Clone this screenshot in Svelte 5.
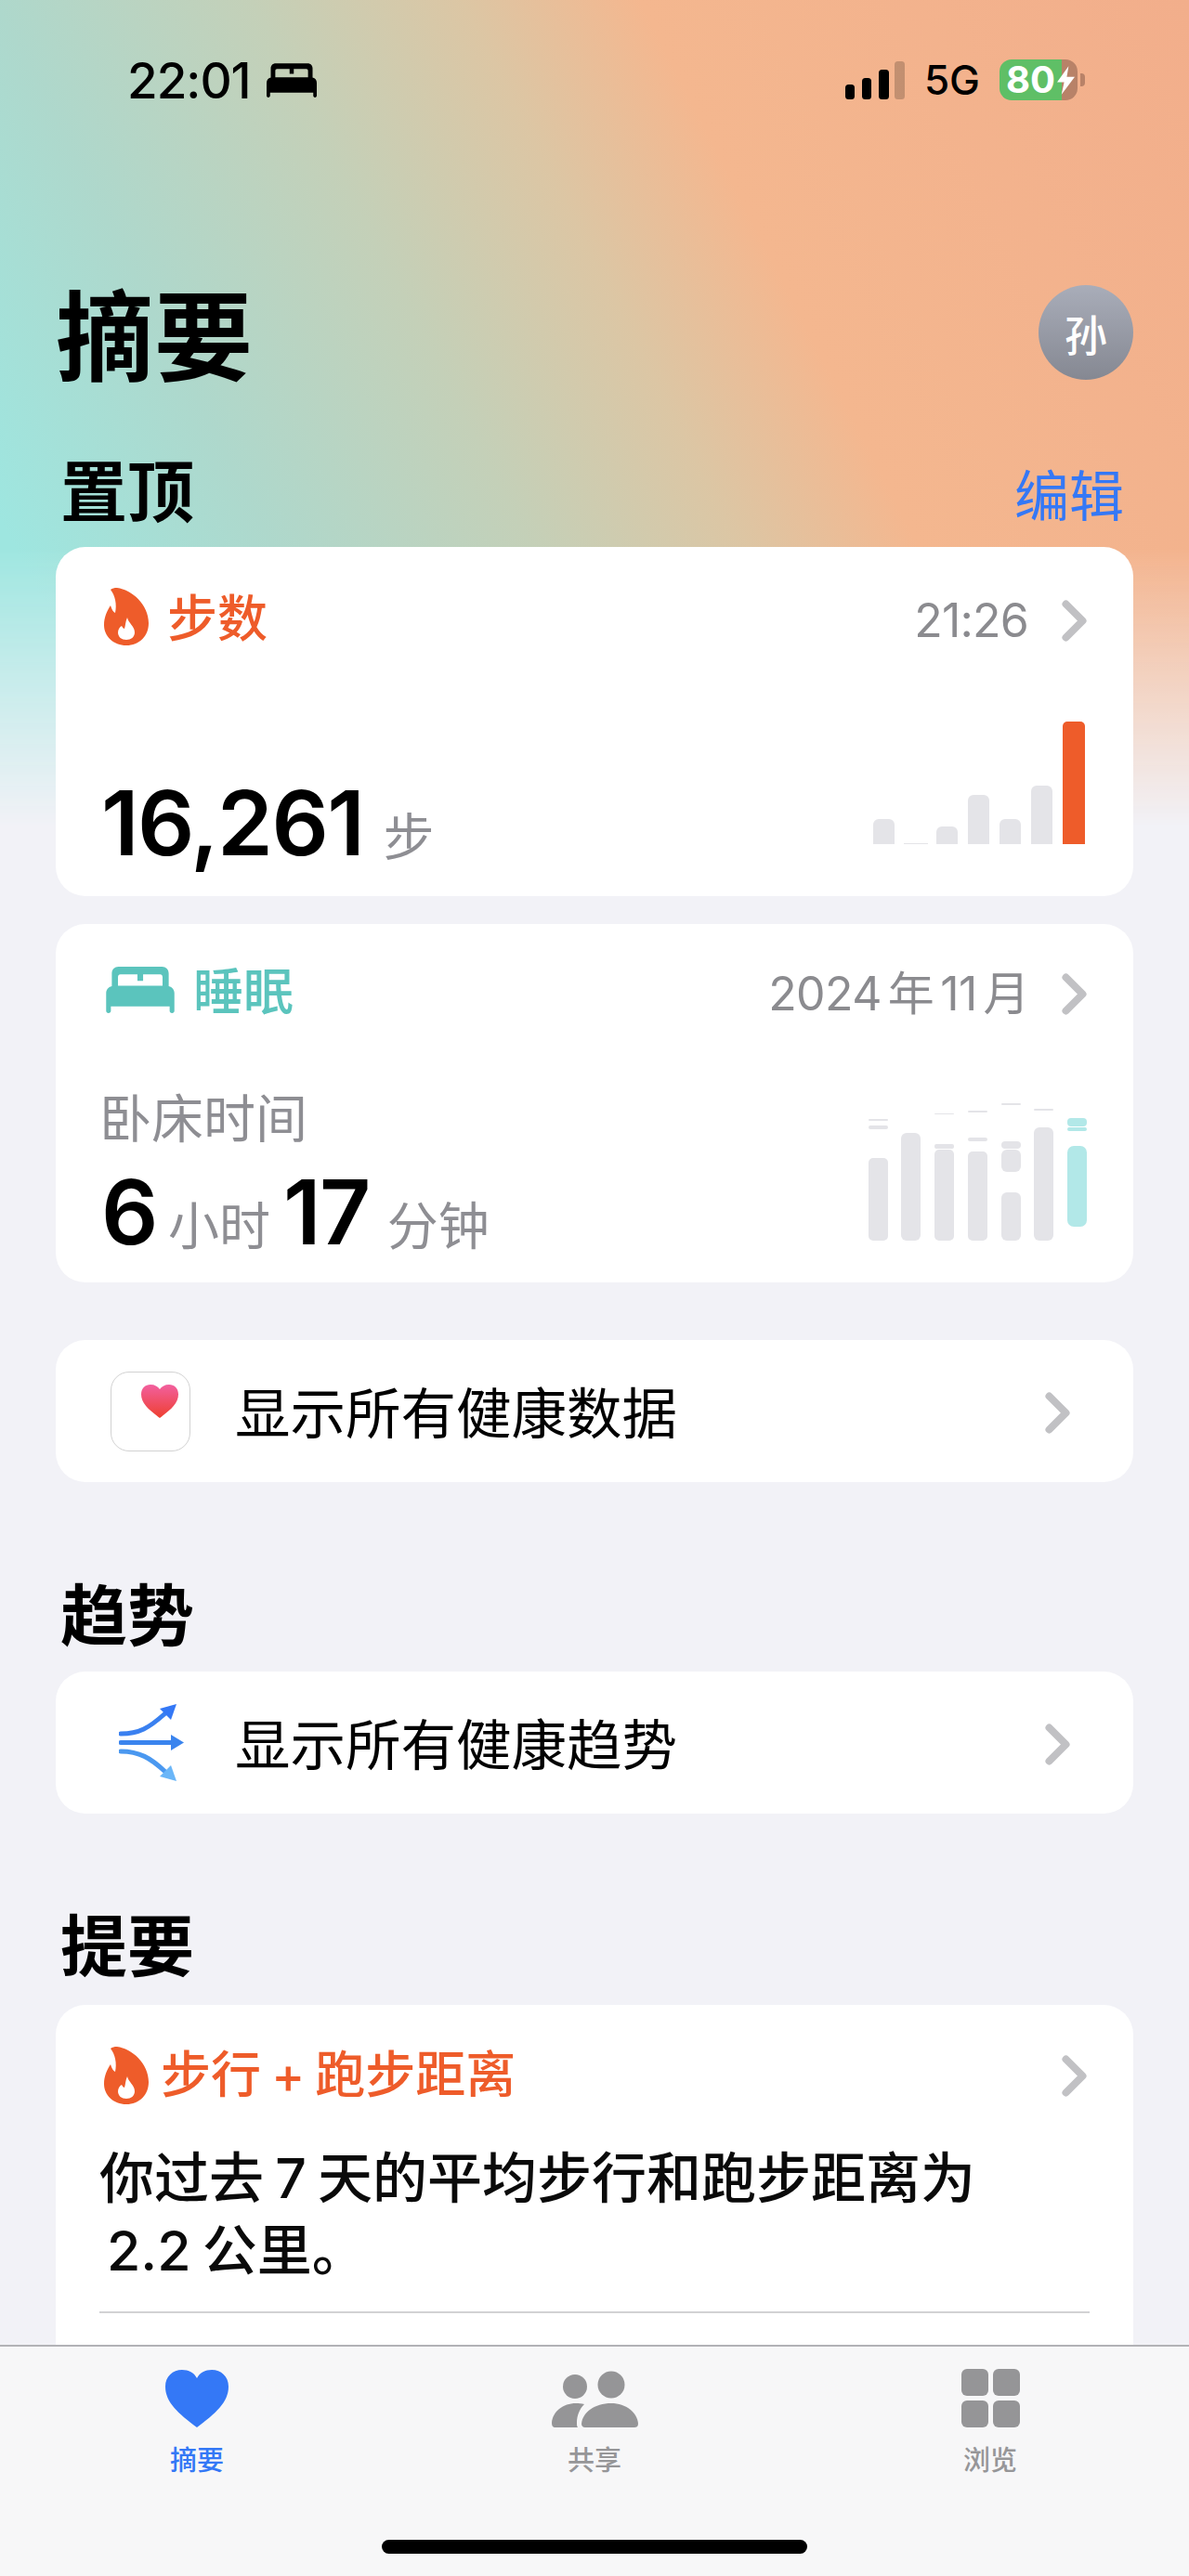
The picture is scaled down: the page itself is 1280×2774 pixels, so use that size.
<script>
  const steps = [
    { x: 0, top: 105 },
    { x: 34, top: 130, thin: true },
    { x: 68, top: 113 },
    { x: 102, top: 79 },
    { x: 136, top: 105 },
    { x: 170, top: 69 }
  ];
  // [x, y, height, radius], relative to the chart origin (935, 1186)
  const sleepGray = [
    [0, 59, 89, 5], [0, 24, 4, 2], [0, 17, 2, 1],
    [35, 32, 116, 6],
    [71, 50, 98, 5], [71, 44, 5, 2], [71, 11, 1, 1],
    [107, 52, 96, 5], [107, 37, 4, 2], [107, 8, 2, 1],
    [143, 96, 52, 6], [143, 50, 24, 6], [143, 41, 8, 4], [143, 0, 2, 1],
    [178, 26, 122, 6], [178, 6, 2, 1]
  ];
  const sleepTeal = [
    [214, 46, 87, 7], [214, 16, 9, 4], [214, 26, 4, 2]
  ];
</script>

{#snippet flame(cls)}
  <svg class={cls} viewBox="0 0 48 62" aria-hidden="true">
    <path fill="#ee5c2a" d="M14 0C30 2 48 18 48 38C48 52 38 62 24 62C10 62 0 52 0 40C0 32 3 25 7 19C8 23 10 26 12 27C14 18 12 8 7 2C9 .5 11 0 14 0Z"/>
    <path fill="#fff" d="M25 32C26 38 33 41 33 48C33 53 29 56 24 56C19 56 15 53 15 48C15 45 17 42 19 41C20 43 21 44 22 44C23 41 23 36 25 32Z"/>
  </svg>
{/snippet}

{#snippet bed(cls, color)}
  <svg class={cls} viewBox="0 0 72 49" aria-hidden="true">
    <path fill={color} fill-rule="evenodd" d="M13 0H59C63 0 66 3 66 7V20.500C70 21.500 72 24.500 72 28V46.500C72 48 71 49 69.500 49C68 49 67 48 67 46.500V42H5V46.500C5 48 4 49 2.500 49C1 49 0 48 0 46.500V28C0 24.500 2 21.500 6 20.500V7C6 3 9 0 13 0ZM15 8C13.500 8 12.500 9 12.500 11V20H59.500V11C59.500 9 58.500 8 57 8H39V15H33V8Z"/>
  </svg>
{/snippet}

{#snippet chevron()}
  <svg class="chevron" viewBox="0 0 27 45" aria-hidden="true">
    <path d="M4.500 4.500L22.500 22.500L4.500 40.500" fill="none" stroke="#c1c1c4" stroke-width="8" stroke-linecap="round" stroke-linejoin="round"/>
  </svg>
{/snippet}

<div class="page">
  <div class="wash"></div>
  <div class="content">
    <header class="status">
      <div class="status-left">
        <span class="clock">22:01</span>
        {@render bed("status-bed", "#000")}
      </div>
      <div class="status-right">
        <svg class="signal" viewBox="0 0 64 41" aria-hidden="true">
          <rect x="0" y="25" width="10" height="16" rx="3.500"/>
          <rect x="18" y="18" width="10" height="23" rx="3.500"/>
          <rect x="36" y="9" width="11" height="32" rx="3.500"/>
          <rect x="53" y="0" width="11" height="41" rx="3.500" opacity="0.2"/>
        </svg>
        <span class="net">5G</span>
        <div class="battery-wrap">
          <div class="battery">
            <span class="battery-num">80</span>
            <svg class="bolt" viewBox="0 0 20 32" aria-hidden="true"><path fill="#fff" d="M13 0L0 18H8L5 32L20 12H11Z"/></svg>
          </div>
          <div class="nub"></div>
        </div>
      </div>
    </header>

    <div class="title-row">
      <h1>摘要</h1>
      <div class="avatar">孙</div>
    </div>

    <div class="section-head pinned">
      <h2>置顶</h2>
      <span class="edit">编辑</span>
    </div>

    <section class="card metric steps">
      <div class="metric-head">
        <div class="metric-name orange">
          {@render flame("flame")}
          <span>步数</span>
        </div>
        <div class="metric-meta"><span class="time">21:26</span>{@render chevron()}</div>
      </div>
      <div class="metric-body">
        <div class="value"><b>16,261</b><small class="step-unit">步</small></div>
        <svg class="step-chart" viewBox="0 0 228 132" aria-hidden="true">
          {#each steps as s}
            {#if s.thin}
              <rect x={s.x - 1} y="131" width="26" height="1" fill="#e4e4e8"/>
            {:else}
              <rect x={s.x} y={s.top} width="23" height={132 - s.top + 8} rx="6" fill="#e4e4e8"/>
            {/if}
          {/each}
          <rect x="204" y="0" width="24" height="142" rx="5" fill="#ee5c2a"/>
        </svg>
      </div>
    </section>

    <section class="card metric sleep">
      <div class="metric-head">
        <div class="metric-name teal">
          {@render bed("sleep-bed", "#5bc4bd")}
          <span>睡眠</span>
        </div>
        <div class="metric-meta"><span class="month">2024 年 11 月</span>{@render chevron()}</div>
      </div>
      <div class="metric-body sleep-body">
        <div>
          <div class="sleep-label">卧床时间</div>
          <div class="value sleep-value"><b>6</b><small>小时</small><b>17</b><small>分钟</small></div>
        </div>
        <svg class="sleep-chart" viewBox="0 0 235 148" aria-hidden="true">
          {#each sleepGray as b}
            <rect x={b[0]} y={b[1]} width="21" height={b[2]} rx={b[3]} fill="#e4e4e8"/>
          {/each}
          {#each sleepTeal as b}
            <rect x={b[0]} y={b[1]} width="21" height={b[2]} rx={b[3]} fill="#b2e8e8"/>
          {/each}
        </svg>
      </div>
    </section>

    <section class="card row first-row">
      <div class="app-icon">
        <svg class="app-heart" viewBox="0 0 40 36" aria-hidden="true">
          <defs>
            <linearGradient id="hg" x1="0" y1="0" x2="0" y2="1">
              <stop offset="0" stop-color="#f2609f"/>
              <stop offset="1" stop-color="#ee3f30"/>
            </linearGradient>
          </defs>
          <path fill="url(#hg)" d="M20 36C8 27 0 20 0 10.500C0 4 4.500 0 10 0C14.500 0 18 2 20 5C22 2 25.500 0 30 0C35.500 0 40 4 40 10.500C40 20 32 27 20 36Z"/>
        </svg>
      </div>
      <span class="row-text">显示所有健康数据</span>
      {@render chevron()}
    </section>

    <div class="section-head trends"><h2>趋势</h2></div>
    <section class="card row">
      <svg class="arrows" viewBox="0 0 70 83" aria-hidden="true">
        <g fill="none" stroke-width="5" stroke-linecap="round">
          <path d="M2 32C22 32 32 26 50 10" stroke="#3a80f0"/>
          <path d="M2 41.500H58" stroke="#3a84ee"/>
          <path d="M2 51C22 51 34 58 50 73" stroke="#4a98f0"/>
        </g>
        <path fill="#3478f6" d="M62 0L56 17L44 5Z"/>
        <path fill="#3a84ee" d="M70 41.500L56 33V50Z"/>
        <path fill="#6ab6f8" d="M62 83L44 78L56 66Z"/>
      </svg>
      <span class="row-text">显示所有健康趋势</span>
      {@render chevron()}
    </section>

    <div class="section-head highlights"><h2>提要</h2></div>
    <section class="card highlight">
      <div class="metric-head">
        <div class="metric-name orange tight">
          {@render flame("flame")}
          <span>步行 + 跑步距离</span>
        </div>
        <div class="metric-meta">{@render chevron()}</div>
      </div>
      <p class="summary">你过去 7 天的平均步行和跑步距离为<br /><span class="indent">2.2 公里。</span></p>
      <div class="divider"></div>
    </section>
  </div>

  <nav class="tabbar">
    <div class="tab active">
      <svg class="tab-heart" viewBox="0 0 68 62" aria-hidden="true">
        <path fill="#3478f6" d="M34 62C14 47 0 35 0 18C0 7 8 0 18 0C25 0 31 3 34 9C37 3 43 0 50 0C60 0 68 7 68 18C68 35 54 47 34 62Z"/>
      </svg>
      <span>摘要</span>
    </div>
    <div class="tab">
      <svg class="tab-share" viewBox="0 0 93 61" aria-hidden="true">
        <g fill="#959597">
          <circle cx="64" cy="15" r="14.500"/>
          <path d="M36 61C33 61 32 59 32 57C33 45 46 35 64 35C80 35 92 45 93 57C93 60 91 61 89 61Z"/>
          <circle cx="25" cy="17" r="13"/>
          <path d="M4 61C1 61 0 59 0 56C1 44 12 35 26 35C29 35 32 35 35 36C30 41 27 48 27 56C27 58 27 60 28 61Z"/>
        </g>
      </svg>
      <span>共享</span>
    </div>
    <div class="tab">
      <div class="tab-grid"><i></i><i></i><i></i><i></i></div>
      <span>浏览</span>
    </div>
    <div class="home"></div>
  </nav>
</div>

<style>
  :global(body) {
    margin: 0;
    background: #f2f2f7;
  }
  .page {
    position: relative;
    width: 1280px;
    height: 2774px;
    overflow: hidden;
    background: #f2f2f7;
    font-family: Inter, "Noto Sans CJK SC", sans-serif;
    color: #000;
  }
  .wash {
    position: absolute;
    inset: 0 0 auto 0;
    height: 900px;
    background: linear-gradient(63deg, #9ee6e0 0%, #9ee6e0 10%, #aed8cc 26%, #c4d0b8 42%, #dcc6a4 55%, #f4b78f 66%, #f2ae8b 100%);
    -webkit-mask-image: linear-gradient(to bottom, #000 0, #000 590px, rgba(0, 0, 0, 0.55) 720px, transparent 890px);
    mask-image: linear-gradient(to bottom, #000 0, #000 590px, rgba(0, 0, 0, 0.55) 720px, transparent 890px);
  }
  .content {
    position: relative;
    padding: 0 60px;
  }
  .status {
    display: flex;
    justify-content: space-between;
    align-items: center;
    height: 172px;
    box-sizing: border-box;
    padding: 0 52px 0 77px;
  }
  .status-left {
    display: flex;
    align-items: center;
    gap: 17px;
  }
  .clock {
    font-size: 53px;
    font-weight: 500;
    line-height: 1;
    letter-spacing: -1px;
    margin-top: 2px;
  }
  .status-bed {
    width: 54px;
    height: 37px;
  }
  .status-right {
    display: flex;
    align-items: center;
  }
  .signal {
    width: 64px;
    height: 41px;
    margin-right: 21px;
  }
  .net {
    font-size: 44px;
    font-weight: 500;
    line-height: 1;
    margin-right: 21px;
  }
  .battery-wrap {
    display: flex;
    align-items: center;
    gap: 3px;
  }
  .battery {
    width: 84px;
    height: 44px;
    border-radius: 13px;
    background: linear-gradient(to right, #5fbf66 67px, #b88268 67px);
    display: flex;
    align-items: center;
    padding-left: 7px;
    box-sizing: border-box;
  }
  .battery-num {
    color: #fff;
    font-size: 40px;
    font-weight: 700;
    line-height: 1;
  }
  .bolt {
    width: 19px;
    height: 31px;
    margin-left: 2px;
    flex: none;
  }
  .nub {
    width: 5px;
    height: 14px;
    border-radius: 0 4px 4px 0;
    background: #b88268;
  }
  .title-row {
    display: flex;
    justify-content: space-between;
    align-items: center;
    height: 102px;
    margin-top: 135px;
  }
  h1 {
    margin: 0;
    padding-top: 12px;
    font-size: 106px;
    font-weight: 700;
    line-height: 102px;
  }
  .avatar {
    width: 102px;
    height: 102px;
    border-radius: 50%;
    background: linear-gradient(#a9adb9, #858892);
    color: #fff;
    font-size: 46px;
    font-weight: 500;
    display: flex;
    align-items: center;
    justify-content: center;
  }
  .section-head {
    display: flex;
    justify-content: space-between;
    align-items: center;
    height: 76px;
    padding: 0 10px 0 5px;
  }
  h2 {
    margin: 0;
    font-size: 72px;
    font-weight: 700;
    line-height: 76px;
  }
  .pinned {
    margin-top: 83px;
    margin-bottom: 21px;
  }
  .edit {
    color: #3478f6;
    font-size: 59px;
    line-height: 76px;
    margin-top: 10px;
  }
  .card {
    background: #fff;
    border-radius: 32px;
    box-sizing: border-box;
  }
  .metric {
    padding: 44px 50px 0 52px;
  }
  .steps {
    height: 376px;
  }
  .sleep {
    height: 386px;
    margin-top: 30px;
    padding-top: 40px;
  }
  .metric-head {
    display: flex;
    justify-content: space-between;
    align-items: center;
    height: 62px;
  }
  .metric-name {
    display: flex;
    align-items: center;
    gap: 20px;
    font-size: 54px;
    font-weight: 500;
    line-height: 62px;
  }
  .metric-name span {
    margin-top: 5px;
  }
  .metric-name.tight {
    gap: 13px;
    word-spacing: -0.06em;
  }
  .metric-name.tight span {
    margin-top: 0;
  }
  .orange {
    color: #ee5c2a;
  }
  .teal {
    color: #5bc4bd;
  }
  .flame {
    width: 48px;
    height: 62px;
    flex: none;
  }
  .sleep-bed {
    width: 74px;
    height: 50px;
    margin-left: 2px;
  }
  .metric-meta {
    display: flex;
    align-items: center;
    gap: 36px;
    color: #8b8b8f;
    font-size: 50px;
    line-height: 62px;
    padding-top: 8px;
  }
  .highlight .metric-meta {
    padding-top: 0;
  }
  .time {
    letter-spacing: -0.8px;
  }
  .month {
    word-spacing: -0.13em;
    letter-spacing: -0.6px;
    margin-right: -1px;
  }
  .chevron {
    width: 27px;
    height: 45px;
    flex: none;
  }
  .metric-body {
    display: flex;
    justify-content: space-between;
    align-items: flex-end;
    margin-top: 82px;
  }
  .value {
    display: flex;
    align-items: baseline;
    margin-left: -3px;
    line-height: 100px;
  }
  .value b {
    font-size: 96px;
    font-weight: 600;
    letter-spacing: -1.5px;
  }
  .value small {
    color: #8e8e93;
    font-size: 55px;
    margin-left: 12px;
  }
  .value .step-unit {
    margin-left: 21px;
  }
  .step-chart {
    width: 228px;
    height: 132px;
    margin-right: 2px;
    margin-bottom: 42px;
    overflow: hidden;
  }
  .sleep-body {
    margin-top: 78px;
  }
  .sleep-label {
    color: #8e8e93;
    font-size: 56px;
    line-height: 60px;
    margin: 0 0 20px -5px;
  }
  .sleep-value b:nth-of-type(2) {
    margin-left: 14px;
  }
  .sleep-value small:nth-of-type(2) {
    margin-left: 19px;
  }
  .sleep-chart {
    width: 235px;
    height: 148px;
    margin-bottom: 34px;
  }
  .row {
    display: flex;
    align-items: center;
    height: 153px;
    padding: 0 68px 0 59px;
  }
  .row .chevron {
    margin-top: 3px;
  }
  .first-row {
    margin-top: 62px;
  }
  .app-icon {
    position: relative;
    width: 86px;
    height: 86px;
    box-sizing: border-box;
    border: 1.5px solid #d2d2d2;
    border-radius: 20px;
    flex: none;
    margin-right: 48px;
  }
  .app-heart {
    position: absolute;
    left: 32px;
    top: 13px;
    width: 40px;
    height: 36px;
  }
  .arrows {
    width: 70px;
    height: 83px;
    flex: none;
    margin: 0 55px 0 9px;
  }
  .row-text {
    flex: 1;
    font-size: 59.500px;
    font-weight: 400;
    line-height: 70px;
    padding-top: 4px;
  }
  .trends {
    margin-top: 106px;
    margin-bottom: 22px;
  }
  .highlights {
    margin-top: 105px;
    margin-bottom: 25px;
  }
  .highlight {
    height: 500px;
    padding: 45px 50px 0 52px;
  }
  .summary {
    margin: 41px 0 0 -5px;
    font-size: 59px;
    font-weight: 500;
    line-height: 78px;
    color: #0a0a0a;
    word-spacing: -0.06em;
  }
  .indent {
    margin-left: 8px;
  }
  .divider {
    height: 2px;
    margin: 26px -3px 0 -5px;
    background: #d2d2d4;
  }
  .tabbar {
    position: absolute;
    left: 0;
    right: 0;
    top: 2525px;
    height: 249px;
    box-sizing: border-box;
    border-top: 2px solid #b2b2b6;
    background: #f7f7f8;
    display: flex;
    padding-top: 24px;
  }
  .tab {
    position: absolute;
    top: 24px;
    height: 116px;
    width: 120px;
    display: flex;
    flex-direction: column;
    align-items: center;
    justify-content: flex-end;
    color: #969698;
    font-size: 29px;
    font-weight: 500;
    line-height: 34px;
    gap: 19px;
  }
  .tab:nth-child(1) { left: 152px; }
  .tab:nth-child(2) { left: 580px; }
  .tab:nth-child(3) { left: 1006px; }
  .tab.active {
    color: #3478f6;
  }
  .tab-heart {
    width: 68px;
    height: 62px;
  }
  .tab-share {
    width: 93px;
    height: 61px;
  }
  .tab-grid {
    display: grid;
    grid-template-columns: 29px 29px;
    grid-template-rows: 29px 29px;
    gap: 5px;
  }
  .tab-grid i {
    background: #959597;
    border-radius: 6px;
  }
  .home {
    position: absolute;
    left: 411px;
    width: 458px;
    top: 208px;
    height: 15px;
    border-radius: 8px;
    background: #000;
  }
</style>
